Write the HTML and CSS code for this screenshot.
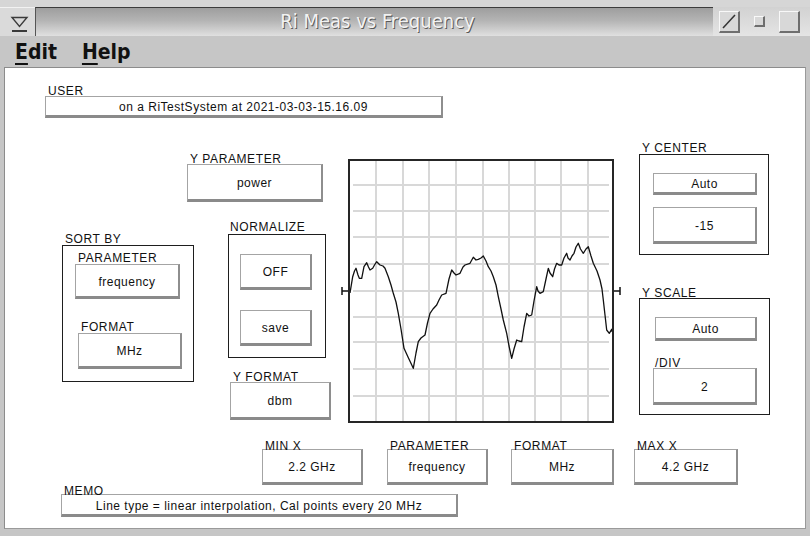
FILE: index.html
```html
<!DOCTYPE html>
<html lang="en">
<head>
    <meta charset="UTF-8">
    <title>Ri Meas vs Frequency</title>
    <link rel="stylesheet" href="styles.css">
</head>
<body>
    <div class="window">
        <div class="titlebar">
            <div class="tb-menu">
                <svg width="35" height="29" viewBox="0 0 35 29">
                    <path d="M12 9.5 H27 L19.5 18.5 Z" fill="none" stroke="#3a3a3a" stroke-width="1.4"/>
                    <path d="M12 23 H27" stroke="#3a3a3a" stroke-width="2"/>
                </svg>
            </div>
            <div class="tb-title">Ri Meas vs Frequency</div>
            <div class="tb-buttons">
                <span class="tb-btn tb-big"><svg width="16" height="16" viewBox="0 0 16 16"><path d="M2 15 L14 2" stroke="#333" stroke-width="1.5"/></svg></span>
                <span class="tb-btn tb-small"></span>
                <span class="tb-btn tb-big"></span>
            </div>
        </div>

        <div class="menubar">
            <span class="menu-item"><u>E</u>dit</span>
            <span class="menu-item"><u>H</u>elp</span>
        </div>

        <div class="panel">
            <div class="field user-field">
                <div class="lbl">USER</div>
                <div class="box user-box">on a RiTestSystem at 2021-03-03-15.16.09</div>
            </div>

            <div class="middle">
                <!-- sort by -->
                <div class="col-sort">
                    <div class="lbl">SORT BY</div>
                    <div class="frame sort-frame">
                        <div class="lbl sort-lbl1">PARAMETER</div>
                        <div class="box sort-box1">frequency</div>
                        <div class="lbl sort-lbl2">FORMAT</div>
                        <div class="box sort-box2">MHz</div>
                    </div>
                </div>

                <!-- y parameter / normalize / y format -->
                <div class="col-y">
                    <div class="lbl">Y PARAMETER</div>
                    <div class="box ypar-box">power</div>
                    <div class="lbl norm-lbl">NORMALIZE</div>
                    <div class="frame norm-frame">
                        <div class="box norm-box">OFF</div>
                        <div class="box norm-box save-box">save</div>
                    </div>
                    <div class="lbl yfmt-lbl">Y FORMAT</div>
                    <div class="box yfmt-box">dbm</div>
                </div>

                <!-- plot -->
                <div class="plot">
                    <svg class="marker" width="7" height="8" viewBox="0 0 7 8"><path d="M1 0 V8 M1 4 H7" stroke="#111" stroke-width="1.5"/></svg>
                    <div class="graph">
                        <svg width="262" height="260" viewBox="0 0 262 260">
                            <g stroke="#d8d8d8" stroke-width="2">
                                <path d="M26 0 V260 M53 0 V260 M79 0 V260 M106 0 V260 M133 0 V260 M159 0 V260 M185 0 V260 M211 0 V260 M238 0 V260"/>
                                <path d="M3 24 H259 M3 50 H259 M3 76 H259 M3 103 H259 M3 130 H259 M3 156 H259 M3 181 H259 M3 208 H259 M3 235 H259"/>
                            </g>
                            <polyline fill="none" stroke="#111" stroke-width="1.3" stroke-linejoin="round"
                                points="0,132 2.7,115.7 4.5,110 6,107.3 8,114 9.3,117.3 11.7,117.3 14,105.7 16.7,101.7 18.5,106 20,109 22.7,107.3 24.5,104 26.7,100.7 30,104 33,105 35,107.3 38.3,115.7 41,124 43.3,132.3 46,141 48.3,152.3 51,168 54,187.3 58,196 63.3,207.3 66,192 68.3,180.7 71,177 75,174 77.5,162 80,152.3 83,148 86.7,144 89,139 91.7,134 96,132.3 99,118 101.7,109 104,112 106,114 110,112.3 113,106 115,104 120,102.3 123.3,96.3 126,99 128.3,98.3 131,97 133.3,95 136,100 138.3,105.7 141,110 143.3,115.7 146,124 148.3,135.7 151,148 153.3,159 156.7,172.3 159,185 161.7,197.3 164,188 166.7,179 169,180 171.7,180.7 174,166 176.7,152.3 179,155 181.7,154 184,140 186.7,125.7 188,130 190,132.3 193.3,130.7 196,118 198.3,107.3 200,112 202.7,115.7 204.5,108 206.7,102.3 209,104 211.7,104 214,97 216.7,92.3 218,97 220,99 222,95 224,92.3 226,86 228.3,82.3 230.5,88 233.3,92.3 236,88 238.3,85.7 241,95 243.3,102.3 247,110 250,119 252,128 253.3,139 255,154 256.7,169 259.3,172.3 261.7,168.3 262,170.7"/>
                        </svg>
                    </div>
                    <svg class="marker" width="7" height="8" viewBox="0 0 7 8"><path d="M6 0 V8 M0 4 H6" stroke="#111" stroke-width="1.5"/></svg>
                </div>

                <!-- y center / y scale -->
                <div class="col-scale">
                    <div class="lbl">Y CENTER</div>
                    <div class="frame center-frame">
                        <div class="box auto-box">Auto</div>
                        <div class="box center-val">-15</div>
                    </div>
                    <div class="lbl yscale-lbl">Y SCALE</div>
                    <div class="frame scale-frame">
                        <div class="box auto-box scale-auto">Auto</div>
                        <div class="lbl div-lbl">/DIV</div>
                        <div class="box div-box">2</div>
                    </div>
                </div>
            </div>

            <div class="xrow">
                <div class="field minx">
                    <div class="lbl">MIN X</div>
                    <div class="box xbox">2.2 GHz</div>
                </div>
                <div class="field xpar">
                    <div class="lbl">PARAMETER</div>
                    <div class="box xbox">frequency</div>
                </div>
                <div class="field xfmt">
                    <div class="lbl">FORMAT</div>
                    <div class="box xbox">MHz</div>
                </div>
                <div class="field maxx">
                    <div class="lbl">MAX X</div>
                    <div class="box xbox">4.2 GHz</div>
                </div>
            </div>

            <div class="field memo">
                <div class="lbl">MEMO</div>
                <div class="box memo-box">Line type = linear interpolation, Cal points every 20 MHz</div>
            </div>
        </div>
    </div>
</body>
</html>
```

FILE: styles.css
```css
* {
    margin: 0;
    padding: 0;
    box-sizing: border-box;
}

body {
    width: 810px;
    height: 536px;
    overflow: hidden;
    background: #c6c6c6;
    font-family: 'Liberation Sans', Arial, sans-serif;
    font-size: 12px;
    color: #111;
}

.window {
    width: 810px;
    height: 536px;
    padding-top: 7px;
    background: linear-gradient(#d6d6d6 0, #d6d6d6 7px, #c6c6c6 7px);
}

/* title bar */
.titlebar {
    display: flex;
    height: 29px;
}

.tb-menu {
    width: 35px;
    background: #dadada;
    border-top: 1px solid #f2f2f2;
}

.tb-title {
    width: 678px;
    border-top: 1px solid #3c3c3c;
    border-left: 1px solid #555;
    background: linear-gradient(#9e9e9e, #b4b4b4 45%, #e0e0e0);
    text-align: center;
    font-family: 'Liberation Sans Narrow', 'DejaVu Sans Condensed', sans-serif;
    font-size: 20px;
    line-height: 27px;
    color: #f2f2f2;
    text-shadow: 1px 1px 0 #5a5a5a;
    padding-left: 6px;
}

.tb-buttons {
    flex: 1;
    display: flex;
    align-items: center;
    background: linear-gradient(#d2d2d2, #e4e4e4);
    padding-left: 6px;
}

.tb-btn {
    display: flex;
    align-items: center;
    justify-content: center;
    border-top: 1px solid #f8f8f8;
    border-left: 1px solid #f8f8f8;
    border-right: 2px solid #6e6e6e;
    border-bottom: 2px solid #6e6e6e;
    background: #d8d8d8;
}

.tb-big {
    width: 21px;
    height: 22px;
}

.tb-small {
    width: 11px;
    height: 11px;
    margin: 0 14px;
}

/* menu bar */
.menubar {
    height: 30px;
    display: flex;
    align-items: center;
    padding-left: 15px;
    gap: 25px;
    font-family: 'Liberation Sans Narrow', 'DejaVu Sans Condensed', sans-serif;
    font-size: 21px;
    font-weight: bold;
    color: #111;
    padding-top: 2px;
}

.menu-item u {
    text-decoration-thickness: 2px;
    text-underline-offset: 4px;
}

/* main panel */
.panel {
    margin: 1px 4px 0 4px;
    height: 462px;
    background: #fff;
    border-top: 1px solid #8c8c8c;
    border-left: 1px solid #8c8c8c;
    border-right: 1px solid #9a9a9a;
    border-bottom: 1px solid #9a9a9a;
}

.lbl {
    line-height: 10px;
    height: 10px;
    letter-spacing: 0.6px;
    padding-left: 3px;
    white-space: nowrap;
}

.box {
    display: flex;
    align-items: center;
    justify-content: center;
    background: #fff;
    border-top: 1px solid #a4a4a4;
    border-left: 1px solid #a4a4a4;
    border-right: 2px solid #8e8e8e;
    border-bottom: 3px solid #8a8a8a;
    letter-spacing: 0.5px;
    white-space: nowrap;
    padding-top: 2px;
}

.frame {
    border: 1px solid #1e1e1e;
}

.user-field {
    margin: 18px 0 0 40px;
}

.user-box {
    width: 398px;
    height: 22px;
}

.middle {
    display: flex;
    align-items: flex-start;
    margin-top: 25px;
    height: 280px;
}

/* sort by column */
.col-sort {
    margin: 91px 0 0 57px;
    width: 132px;
}

.sort-frame {
    width: 132px;
    height: 137px;
    margin-top: 1px;
    padding-top: 7px;
}

.sort-lbl1 {
    padding-left: 15px;
}

.sort-box1 {
    margin: 1px 0 0 12px;
    width: 105px;
    height: 35px;
}

.sort-lbl2 {
    margin-top: 23px;
    padding-left: 18px;
}

.sort-box2 {
    margin: 1px 0 0 15px;
    width: 104px;
    height: 36px;
}

/* y parameter column */
.col-y {
    margin: 11px 0 0 -7px;
    width: 144px;
}

.ypar-box {
    width: 136px;
    height: 38px;
}

.norm-lbl {
    margin-top: 20px;
    padding-left: 43px;
}

.norm-frame {
    margin: 2px 0 0 41px;
    width: 98px;
    height: 124px;
    padding: 19px 0 0 11px;
}

.norm-box {
    width: 72px;
    height: 36px;
}

.save-box {
    margin-top: 20px;
}

.yfmt-lbl {
    margin-top: 14px;
    padding-left: 46px;
}

.yfmt-box {
    margin-left: 43px;
    width: 101px;
    height: 38px;
}

/* plot */
.plot {
    display: flex;
    align-items: center;
    margin: 16px 0 0 10px;
}

.marker {
    display: block;
}

.graph {
    width: 266px;
    height: 264px;
    border: 2px solid #262626;
    background: #fff;
}

.graph svg {
    display: block;
}

/* y center / y scale column */
.col-scale {
    margin-left: 18px;
    width: 131px;
}

.center-frame {
    margin-top: 1px;
    width: 130px;
    height: 101px;
    padding: 18px 0 0 13px;
}

.auto-box {
    width: 104px;
    height: 22px;
}

.center-val {
    margin-top: 12px;
    width: 104px;
    height: 37px;
}

.yscale-lbl {
    margin-top: 33px;
}

.scale-frame {
    width: 131px;
    height: 117px;
    padding-top: 18px;
}

.scale-auto {
    margin-left: 15px;
    width: 102px;
    height: 24px;
}

.div-lbl {
    margin-top: 17px;
    padding-left: 15px;
}

.div-box {
    margin-left: 13px;
    width: 104px;
    height: 37px;
}

/* x axis row */
.xrow {
    display: flex;
    margin-top: 18px;
}

.xrow .box {
    margin-top: -2px;
    height: 36px;
}

.minx {
    margin-left: 257px;
    width: 101px;
}

.xpar {
    margin-left: 24px;
    width: 101px;
}

.xfmt {
    margin-left: 23px;
    width: 103px;
}

.maxx {
    margin-left: 20px;
    width: 104px;
}

/* memo */
.memo {
    margin: 1px 0 0 56px;
}

.memo-box {
    margin-top: -2px;
    width: 397px;
    height: 23px;
}
```
